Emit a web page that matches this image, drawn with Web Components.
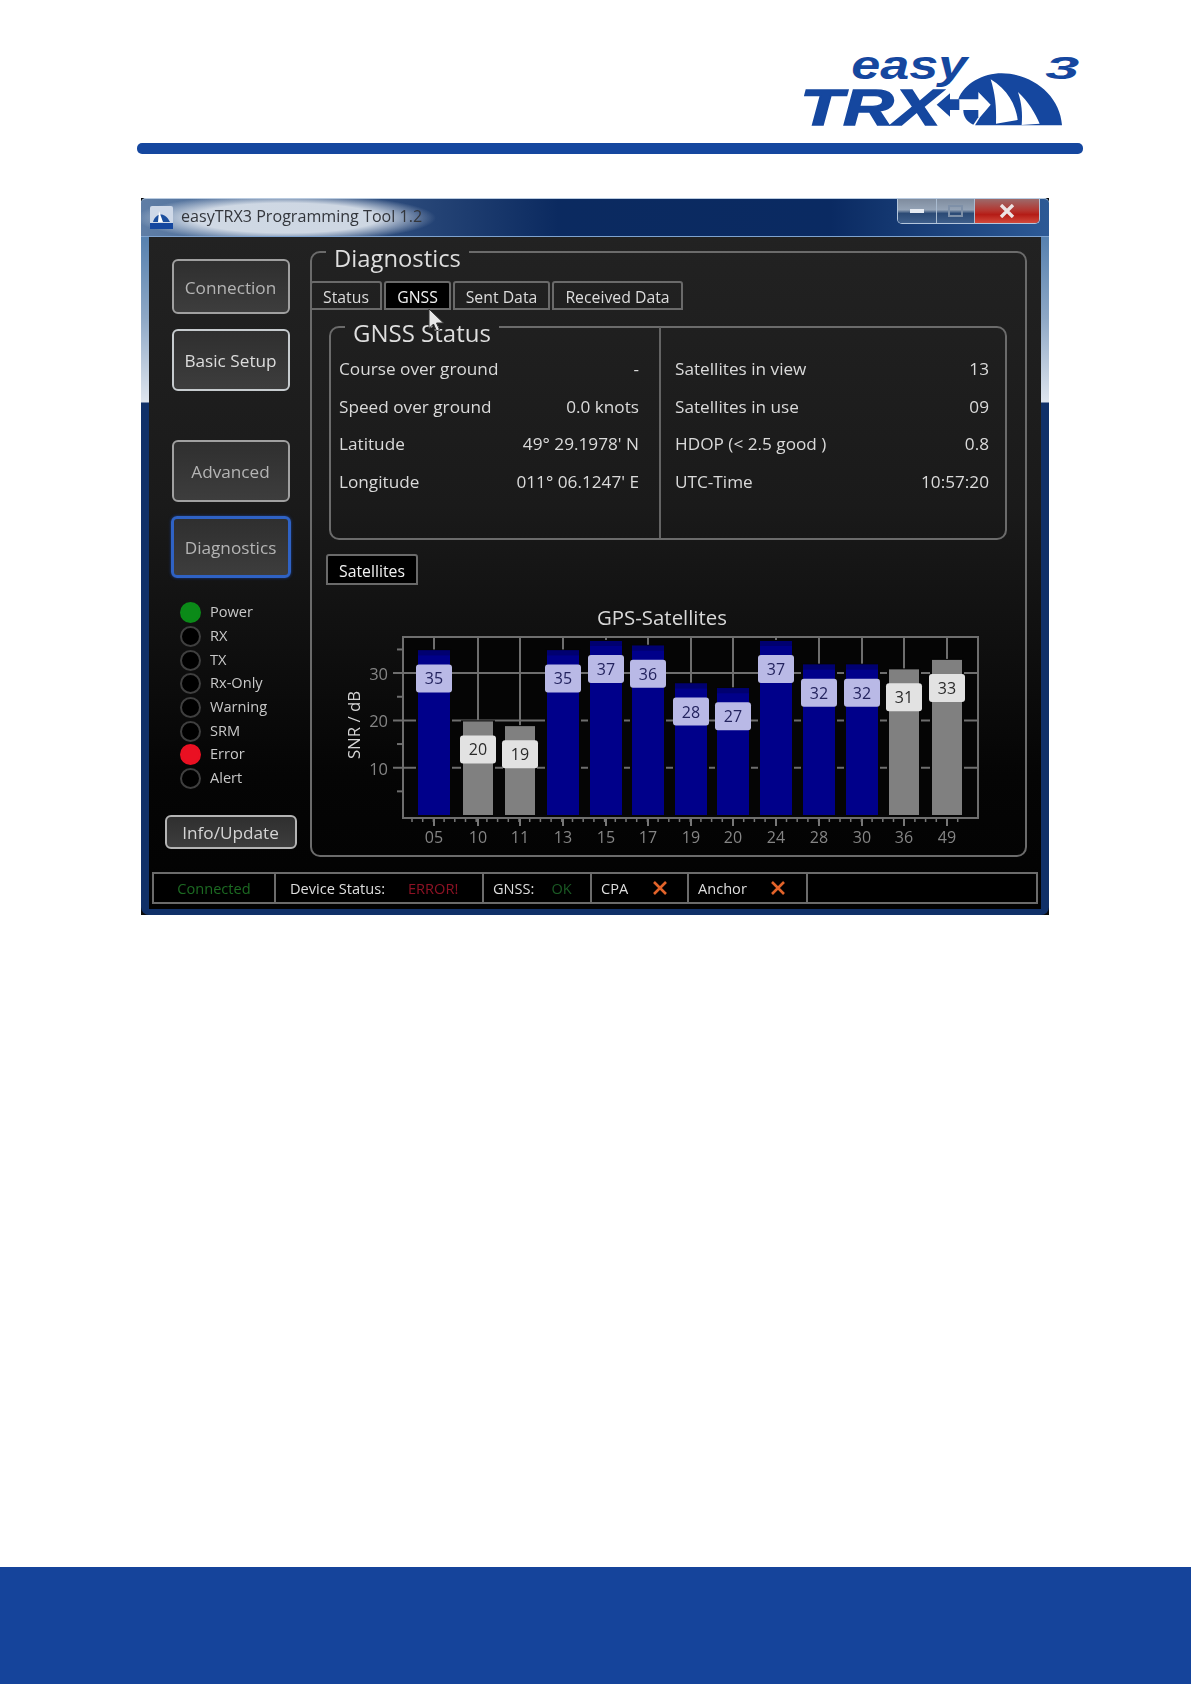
<!DOCTYPE html>
<html lang="en"><head><meta charset="utf-8"><title>easyTRX3</title>
<style>
html,body{margin:0;padding:0;background:#fff}
body{font-family:"Open Sans","Noto Sans",sans-serif;width:1191px;height:1684px;overflow:hidden}
</style></head>
<body>
<app-page>
  <brand-header></brand-header>
  <app-window>
    <side-bar slot="side">
      <side-button style="height:55px">Connection</side-button>
      <side-button bright style="height:62px;margin-top:15px">Basic Setup</side-button>
      <side-button style="height:62px;margin-top:49px">Advanced</side-button>
      <side-button active style="height:62px;margin-top:14px">Diagnostics</side-button>
      <led-list>
        <led-row color="#0b8a18">Power</led-row>
        <led-row>RX</led-row>
        <led-row>TX</led-row>
        <led-row>Rx-Only</led-row>
        <led-row>Warning</led-row>
        <led-row>SRM</led-row>
        <led-row color="#ea1022">Error</led-row>
        <led-row>Alert</led-row>
      </led-list>
      <side-button wide style="height:34px;margin-top:25px">Info/Update</side-button>
    </side-bar>
    <group-box slot="main" legend="Diagnostics" class="outer">
      <tab-row>
        <tab-item w="72">Status</tab-item>
        <tab-item w="67" selected style="margin-left:2px">GNSS</tab-item>
        <tab-item w="97" style="margin-left:2px">Sent Data</tab-item>
        <tab-item w="131" style="margin-left:2px">Received Data</tab-item>
      </tab-row>
      <group-box legend="GNSS Status" class="inner" style="margin:-4px 0 0 17px;width:678px;height:234px">
        <info-columns>
          <info-col slot="a">
            <info-row label="Course over ground">-</info-row>
            <info-row label="Speed over ground">0.0 knots</info-row>
            <info-row label="Latitude">49° 29.1978' N</info-row>
            <info-row label="Longitude">011° 06.1247' E</info-row>
          </info-col>
          <info-col slot="b">
            <info-row label="Satellites in view">13</info-row>
            <info-row label="Satellites in use">09</info-row>
            <info-row label="HDOP (&lt; 2.5 good )">0.8</info-row>
            <info-row label="UTC-Time">10:57:20</info-row>
          </info-col>
        </info-columns>
      </group-box>
      <tab-item w="92" h="31" selected style="margin:14px 0 0 14px">Satellites</tab-item>
      <sat-chart></sat-chart>
    </group-box>
    <status-bar slot="status">
      <status-cell w="122" style="justify-content:center;color:#1c6a22">Connected</status-cell>
      <status-cell w="208" style="padding-left:14px">Device Status:<status-note style="color:#8d1224;margin-left:23px">ERROR!</status-note></status-cell>
      <status-cell w="108" style="padding-left:9px">GNSS:<status-note style="color:#1a5a24;margin-left:17px">OK</status-note></status-cell>
      <status-cell w="97" style="padding-left:9px">CPA<status-x style="margin-left:25px"></status-x></status-cell>
      <status-cell w="119" style="padding-left:9px">Anchor<status-x style="margin-left:24px"></status-x></status-cell>
      <status-cell style="flex:1"></status-cell>
    </status-bar>
    <mouse-cursor slot="over"></mouse-cursor>
  </app-window>
  <footer-band></footer-band>
</app-page>
<script>
function def(name, html, extra){
  const tpl=document.createElement('template');tpl.innerHTML=html;
  customElements.define(name,class extends HTMLElement{
    constructor(){super();this.attachShadow({mode:'open'}).appendChild(tpl.content.cloneNode(true));}
    connectedCallback(){if(extra)extra(this,this.shadowRoot);}
  });
}
def('app-page',`<style>:host{display:flex;flex-direction:column;height:1684px}
  ::slotted(app-window){margin:44px 0 0 141px}
  ::slotted(footer-band){margin-top:auto}</style><slot></slot>`);

def('brand-header',`<style>:host{display:block;padding:30px 108px 0 137px;color:#15479f}
 .logo{display:block;margin-left:auto;width:300px;height:105px}
 .rule{height:11px;margin-top:8px;background:#15479f;border-radius:5px}
 text{font-family:"Liberation Sans",sans-serif;font-weight:700;font-style:italic;fill:#15479f}
 </style>
 <svg class="logo" viewBox="9 0 900 315" aria-label="easyTRX3 logo">
  <text x="214" y="146" font-size="122" textLength="348" lengthAdjust="spacingAndGlyphs">easy</text>
  <text x="60" y="286" font-size="152" textLength="422" lengthAdjust="spacingAndGlyphs" stroke="#15479f" stroke-width="4">TRX</text>
  <text x="796" y="148" font-size="96" textLength="102" lengthAdjust="spacingAndGlyphs">3</text>
  <path fill="#15479f" d="M535 208C552 160 610 130 665 130C755 130 840 195 846 286L585 286L600 262L632 224L595 186V208Z"/>
  <path fill="#15479f" d="M470 224L510 190V208H538V240H510V260Z"/>
  <path fill="#15479f" d="M550 240H595V262L580 284C560 275 550 260 550 240Z"/>
  <path fill="#fff" d="M632 148C682 178 708 225 713 270L648 281C650 230 645 190 632 148Z"/>
  <path fill="#fff" d="M714 186C745 215 766 250 779 281L725 285C728 250 725 220 714 186Z"/>
 </svg><div class="rule"></div>`);

def('footer-band',`<style>:host{display:block;height:117px;background:#15449b}</style>`);

def('app-window',`<style>
 :host{display:block;width:908px;height:717px;background:#0a0a0a;filter:blur(.45px);position:relative;color:#ddd}
 .frame{box-sizing:border-box;height:100%;display:flex;flex-direction:column;padding:0 8px 6px;border-radius:5px 5px 8px 8px;
  background:linear-gradient(180deg,#3b6ea5 0,#8ea8c6 120px,#dfe5ee 204px,#103068 205px,#103068 100%);position:relative}
 .title{flex:none;height:39px;margin:0 -8px;display:flex;align-items:flex-start;position:relative;padding-left:9px;border-radius:5px 5px 0 0;
  border-bottom:1px solid #7fa3cf;border-top:1px solid #b9cbe0;box-sizing:border-box;
  background:radial-gradient(ellipse 150px 24px at 145px 19px,rgba(214,222,232,.95) 62%,rgba(200,214,230,0) 100%),
   linear-gradient(90deg,#5f7ea6 0,#0b2a60 46%,#0a2a62 76%,#2d5a96 100%)}
 .title svg.ic{width:23px;height:23px;margin-top:7px}
 .title span{margin:6px 0 0 8px;font-size:16.1px;line-height:22px;color:#33363c}
 .ctl{margin-left:auto;margin-right:9px;display:flex;height:25px;border:1px solid #b4c6dc;border-top:0;border-radius:0 0 5px 5px;overflow:hidden;box-sizing:border-box;width:143px}
 .ctl i{display:flex;align-items:center;justify-content:center;border-right:1px solid #a9bbd0;background:linear-gradient(180deg,#7f8c9e,#94a3b6 45%,#2b4a75 60%,#3f5f8b)}
 .ctl .mn{width:38px}.ctl .mx{width:37px}
 .ctl .cl{flex:1;border:0;background:linear-gradient(180deg,#9c6a6a,#b5332d 50%,#b41c16 65%,#d24a3c)}
 .ctl b{display:block}
 .client{flex:1;min-height:0;background:linear-gradient(180deg,#222 0,#1a1a1a 40%,#050505 80%,#020202 100%);display:grid;grid-template-columns:161px 1fr;grid-template-rows:1fr auto;padding:0 3px 6px;position:relative}
 .side{padding-top:22px}
 .main{padding-right:11px;margin-left:-3px;margin-top:-6px}
 .stat{grid-column:1/3;padding-top:15px}
 </style>
 <div class="frame">
  <div class="title">
   <svg class="ic" viewBox="0 0 23 23"><rect width="23" height="23" rx="2" fill="#cfd9e8"/><path fill="#1c4f9e" d="M3 16C5 8 14 4 20 16Z"/><path fill="#fff" d="M9 5l4 11H8Z"/><rect x="0" y="17" width="23" height="6" fill="#15479f"/></svg>
   <span>easyTRX3 Programming Tool 1.2</span>
   <div class="ctl"><i class="mn"><b style="width:14px;height:4px;background:#e6ebf2"></b></i><i class="mx"><b style="width:11px;height:8px;border:2px solid #7e90a8"></b></i>
    <i class="cl"><svg width="16" height="14" viewBox="0 0 16 14"><path d="M2 1l12 12M14 1L2 13" stroke="#ece4e4" stroke-width="3.4"/></svg></i></div>
  </div>
  <div class="client">
   <div class="side"><slot name="side"></slot></div>
   <div class="main"><slot name="main"></slot></div>
   <div class="stat"><slot name="status"></slot></div>
  </div>
 </div>
 <slot name="over"></slot>`);

def('side-bar',`<style>:host{display:flex;flex-direction:column;align-items:center;width:157px}</style><slot></slot>`);

def('side-button',`<style>:host{display:flex;align-items:center;justify-content:center;box-sizing:border-box;width:118px;padding-top:1px;border:2px solid #a0a0a0;border-radius:6px;
 background:linear-gradient(180deg,#2f2f2f,#3d3d3d);color:#b4b4b4;font-size:17.2px}
 :host([bright]){border-color:#c6cbce;color:#dcdcdc}
 :host([active]){border:3px solid #2f62c4;width:120px;box-shadow:0 0 3px #1a3f8f}
 :host([wide]){width:132px;color:#d4d4d4;border-color:#b4b4b4}</style><slot></slot>`);

def('led-list',`<style>:host{display:block;margin-top:23px;width:117px;padding-left:9px;box-sizing:border-box}</style><slot></slot>`);
def('led-row',`<style>:host{display:flex;align-items:center;height:23.65px;font-size:14.6px;color:#c8c8c8}
 span{padding-bottom:3px}
 i{box-sizing:border-box;width:21px;height:21px;border-radius:50%;border:2px solid #3f3f3f;background:#000;margin:0 9px 0 -1px;flex:none}</style><i></i><span><slot></slot></span>`,
 (h,s)=>{const c=h.getAttribute('color');if(c){const i=s.querySelector('i');i.style.background=c;i.style.borderColor=c;}});

def('group-box',`<style>:host{display:block;box-sizing:border-box}
 :host(.outer){height:626px}
 fieldset{margin:0;padding:0;height:100%;box-sizing:border-box;border:2px solid #6b6b6b;border-radius:10px;min-width:0;display:block}
 legend{margin-left:14px;padding:13px 8px 0;height:42px;box-sizing:border-box;line-height:29px;color:#dedede;font-size:23.8px;white-space:nowrap}
 :host(.inner) legend{padding-top:11px;line-height:31px;font-size:24px}
 </style><fieldset><legend></legend><slot></slot></fieldset>`,
 (h,s)=>{s.querySelector('legend').textContent=h.getAttribute('legend');});

def('tab-row',`<style>:host{display:flex;padding-top:8px;margin-left:-2px}</style><slot></slot>`);
def('tab-item',`<style>:host{display:flex;align-items:center;justify-content:center;box-sizing:border-box;height:29px;padding-top:2px;border:2px solid #6a6a6a;border-radius:3px 3px 0 0;font-size:15.8px;color:#dcdcdc}
 :host([selected]){background:#000;color:#f2f2f2}</style><slot></slot>`,
 (h)=>{h.style.width=h.getAttribute('w')+'px';if(h.getAttribute('h'))h.style.height=h.getAttribute('h')+'px';});

def('info-columns',`<style>:host{display:grid;grid-template-columns:330px 1fr;margin-top:-21px;height:211px}
 ::slotted([slot=a]){border-right:2px solid #636363;padding:23px 20px 0 8px}
 ::slotted([slot=b]){padding:23px 16px 0 14px}</style><slot name="a"></slot><slot name="b"></slot>`);
def('info-col',`<style>:host{display:block;box-sizing:border-box}</style><slot></slot>`);
def('info-row',`<style>:host{display:flex;justify-content:space-between;align-items:center;height:37.6px;font-size:17.2px;color:#dadada}</style><span></span><slot></slot>`,
 (h,s)=>{s.querySelector('span').textContent=h.getAttribute('label');});

def('sat-chart',`<style>:host{display:block;margin-top:13px}
 svg{display:block;width:713px;height:257px}
 text{font-family:"Open Sans","Noto Sans",sans-serif}</style>
 <svg viewBox="312 597 713 257"></svg>`,(h,s)=>{
  const sats=[['05',35,434,1],['10',20,478,0],['11',19,520,0],['13',35,563,1],['15',37,606,1],['17',36,648,1],['19',28,691,1],['20',27,733,1],['24',37,776,1],['28',32,819,1],['30',32,862,1],['36',31,904,0],['49',33,947,0]];
  const Y=v=>814-v*4.73;let o='';
  o+=`<text x="662" y="624" text-anchor="middle" font-size="20.4" fill="#d8d8d8">GPS-Satellites</text>`;
  o+=`<rect x="403" y="636" width="575" height="181" fill="#050505" stroke="#6e6e6e" stroke-width="2"/>`;
  [10,20,30].forEach(v=>{o+=`<path d="M393 ${Y(v)}H978" stroke="#6e6e6e" stroke-width="2"/>`;
    o+=`<text x="388" y="${Y(v)+7}" text-anchor="end" font-size="16.5" fill="#858585">${v}</text>`;});
  [5,15,25,35].forEach(v=>{o+=`<path d="M397 ${Y(v)}H402" stroke="#6e6e6e" stroke-width="2"/>`;});
  o+=`<text transform="translate(360 724) rotate(-90)" text-anchor="middle" font-size="16.8" fill="#d4d4d4">SNR / dB</text>`;
  sats.forEach(t=>{o+=`<path d="M${t[2]} 636V814" stroke="#6e6e6e" stroke-width="2"/>`;});
  for(let x=412;x<968;x+=10.7){o+=`<path d="M${x.toFixed(1)} 818v3" stroke="#777" stroke-width="1.5"/>`;}
  sats.forEach(t=>{const [n,v,x,b]=t,top=Y(v)+1,w=b?32:30;
    o+=`<path d="M${x} 818v7" stroke="#777" stroke-width="2"/>`;
    o+=`<rect x="${x-w/2-2}" y="${top-1}" width="${w+4}" height="${814-top+3}" fill="#050505"/>`;
    o+=`<rect x="${x-w/2}" y="${top}" width="${w}" height="${814-top}" fill="${b?'#00008a':'#808080'}"/>`;
    if(b)o+=`<rect x="${x-w/2}" y="${top}" width="${w}" height="5" fill="#000070"/>`;
    o+=`<rect x="${x-18}" y="${top+14}" width="36" height="28" rx="3" fill="${b?'#b9b9e6':'#e2e2e2'}"/>`;
    o+=`<text x="${x}" y="${top+34}" text-anchor="middle" font-size="16" fill="${b?'#23235e':'#2a2a2a'}">${v}</text>`;
    o+=`<text x="${x}" y="842" text-anchor="middle" font-size="16" fill="#858585">${n}</text>`;});
  s.querySelector('svg').innerHTML=o;
 });

def('status-bar',`<style>:host{display:flex;height:32px;box-sizing:border-box;border:2px solid #6b6b6b;background:#000}</style><slot></slot>`);
def('status-cell',`<style>:host{display:flex;align-items:center;box-sizing:border-box;border-right:2px solid #6b6b6b;font-size:14.6px;color:#dedede;white-space:nowrap}
 :host(:last-child){border-right:0}</style><slot></slot>`,(h)=>{const w=h.getAttribute('w');if(w)h.style.width=w+'px';});
def('status-note',`<style>:host{display:inline}</style><slot></slot>`);
def('status-x',`<style>:host{display:block;width:14px;height:14px}svg{display:block}</style><svg width="14" height="14" viewBox="0 0 14 14"><path d="M1 1l12 12M13 1L1 13" stroke="#e2632a" stroke-width="2.6"/></svg>`);
def('mouse-cursor',`<style>:host{position:absolute;left:287px;top:110px;width:18px;height:24px}svg{display:block}</style>
 <svg width="18" height="24" viewBox="0 0 18 24"><path d="M1 1V20.500L5.500 16 8.500 23 11.500 21.500 8.500 15H15.500Z" fill="#e8e8e8" stroke="#333" stroke-width="1"/></svg>`);
</script>
</body></html>
